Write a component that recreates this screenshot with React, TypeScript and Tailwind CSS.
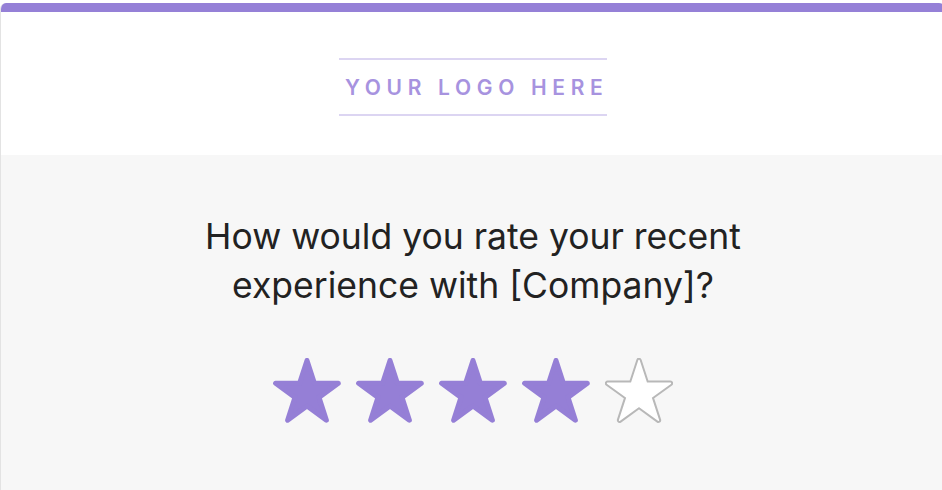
import React from "react";

const STAR_POINTS =
  "34,2.5 41.41,25.31 65.39,25.3 45.98,39.39 53.4,62.2 34,48.1 14.6,62.2 22.02,39.39 2.61,25.3 26.59,25.31";

const Star = ({ filled }: { filled: boolean }) => (
  <svg width="68" height="66" viewBox="0 0 68 66" className="shrink-0">
    {filled ? (
      <polygon
        points={STAR_POINTS}
        fill="#957fd6"
        stroke="#957fd6"
        strokeWidth="5"
        strokeLinejoin="round"
      />
    ) : (
      <>
        <polygon
          points={STAR_POINTS}
          fill="#b8b8b8"
          stroke="#b8b8b8"
          strokeWidth="5.5"
          strokeLinejoin="round"
        />
        <polygon
          points={STAR_POINTS}
          fill="#ffffff"
          stroke="#ffffff"
          strokeWidth="1.5"
          strokeLinejoin="round"
        />
      </>
    )}
  </svg>
);

export default function App() {
  const rating = 4;

  return (
    <div className="w-full h-[490px] bg-white overflow-hidden pt-[3px] font-['Inter',sans-serif]">
      <div className="w-[945px] h-[500px] rounded-t-[6px] overflow-hidden border-l border-[#e3e3e3] flex flex-col">
        {/* Top accent bar */}
        <div className="h-[9px] bg-[#9580d7] shrink-0" />

        {/* Logo header */}
        <div className="h-[143px] bg-white flex items-start justify-center pt-[46px] shrink-0">
          <div className="w-[268px] border-y-2 border-[#dcd5f2] flex justify-start pl-[6px] pt-[16px] pb-[14px]">
            <span className="whitespace-nowrap text-[21px] leading-[24px] font-semibold tracking-[0.27em] text-[#a793df]">
              YOUR LOGO HERE
            </span>
          </div>
        </div>

        {/* Rating body */}
        <div className="flex-1 bg-[#f7f7f7] flex flex-col items-center pt-[57px]">
          <h1 className="text-[35.5px] leading-[49px] text-[#222222] text-center font-normal">
            How would you rate your recent
            <br />
            experience with [Company]?
          </h1>
          <div className="flex gap-[15px] mt-[48px]">
            {[1, 2, 3, 4, 5].map((n) => (
              <Star key={n} filled={n <= rating} />
            ))}
          </div>
        </div>
      </div>
    </div>
  );
}
